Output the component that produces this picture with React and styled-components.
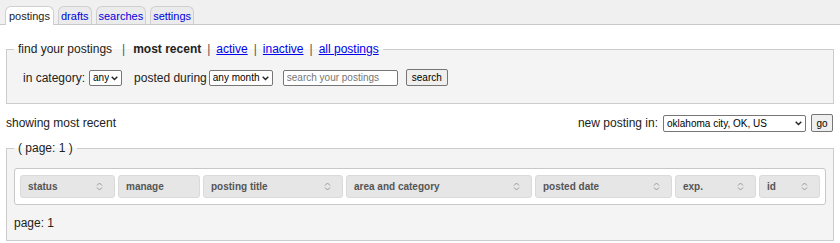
import React from "react";
import styled, { createGlobalStyle } from "styled-components";

const Global = createGlobalStyle`
  html, body { margin: 0; padding: 0; background: #fff; }
  body { font-family: "Liberation Sans", Arial, sans-serif; font-size: 12px; color: #222; }
`;

const TabBar = styled.div`
  display: flex;
  gap: 4px;
  padding: 6px 5px 0;
  background: #f0f0f0;
  border-bottom: 1px solid #c8c8c8;
  height: 18px;
  align-items: flex-end;
`;

const Tab = styled.a`
  display: block;
  box-sizing: border-box;
  padding: 2px ${(p) => (p.$active ? 3 : 2)}px 1px;
  font-size: 11px;
  line-height: 14px;
  height: ${(p) => (p.$active ? "19px" : "18px")};
  border: 1px solid #cfcfcf;
  border-bottom: none;
  border-radius: 6px 6px 0 0;
  background: ${(p) => (p.$active ? "#fff" : "#ebebeb")};
  color: ${(p) => (p.$active ? "#222" : "#0000dd")};
  text-decoration: none;
  margin-bottom: ${(p) => (p.$active ? "-1px" : "0")};
  position: relative;
`;

const Main = styled.div`
  padding: 0 6px;
`;

const Fieldset = styled.fieldset`
  margin: ${(p) => p.$mt}px 0 0;
  border: 1px solid #ccc;
  background: #f4f4f4;
  padding: ${(p) => p.$pt}px 7px ${(p) => p.$pb}px;
  min-width: 0;
`;

const Legend = styled.legend`
  padding: 0 4px;
  font-size: 12px;
  line-height: 15px;
  color: #222;
`;

const Sep = styled.span`
  color: #555;
  margin: 0 ${(p) => p.$r || 6}px 0 ${(p) => p.$l || 6}px;
`;

const Current = styled.b`
  font-weight: bold;
`;

const Link = styled.a`
  color: #0000ee;
  text-decoration: underline;
`;

const FilterRow = styled.div`
  display: flex;
  align-items: center;
  padding-left: 9px;
  height: 17px;
`;

const Label = styled.span`
  font-size: 12px;
  margin-right: ${(p) => p.$mr || 0}px;
`;

const SelectWrap = styled.span`
  position: relative;
  display: inline-block;
  margin-right: ${(p) => p.$mr || 0}px;
  height: ${(p) => p.$h || 16}px;
`;

const Select = styled.select`
  appearance: none;
  -webkit-appearance: none;
  font-family: "Liberation Sans", Arial, sans-serif;
  font-size: 10px;
  height: 100%;
  width: ${(p) => p.$w}px;
  padding: 0 12px 0 3px;
  margin: 0;
  border: 1px solid #767676;
  border-radius: 2px;
  background: #fff;
  color: #000;
  box-sizing: border-box;
  vertical-align: top;
`;

const Chevron = styled.svg`
  position: absolute;
  right: 4px;
  top: 50%;
  margin-top: -2px;
  pointer-events: none;
`;

const Input = styled.input`
  font-family: "Liberation Sans", Arial, sans-serif;
  font-size: 10px;
  width: 115px;
  height: 16px;
  box-sizing: border-box;
  padding: 0 3px;
  margin: 0 8px 0 0;
  border: 1px solid #767676;
  border-radius: 2px;
  &::placeholder { color: #757575; }
`;

const Button = styled.button`
  font-family: "Liberation Sans", Arial, sans-serif;
  font-size: 10px;
  height: ${(p) => p.$h || 17}px;
  width: ${(p) => p.$w}px;
  padding: 0;
  margin: 0;
  border: 1px solid #767676;
  border-radius: 2px;
  background: #efefef;
  color: #000;
`;

const StatusRow = styled.div`
  display: flex;
  align-items: center;
  justify-content: space-between;
  margin-top: 10px;
  height: 18px;
`;

const NewPosting = styled.div`
  display: flex;
  align-items: center;
  gap: 5px;
  margin-right: 1px;
`;

const TableBox = styled.div`
  background: #fff;
  border: 1px solid #c8c8c8;
  border-radius: 3px;
  padding: 6px 5px;
  display: grid;
  grid-template-columns: 95px 82px 140px 186px 137px 81px 61px;
  gap: 3px;
`;

const HeadCell = styled.div`
  height: 23px;
  box-sizing: border-box;
  background: #e6e6e6;
  border: 1px solid #dadada;
  border-radius: 3px;
  display: flex;
  align-items: center;
  justify-content: space-between;
  padding: 0 11px 0 7px;
  font-size: 10px;
  font-weight: bold;
  color: #555;
`;

const PageText = styled.div`
  margin-top: 11px;
  font-size: 12px;
  line-height: 15px;
`;

const SortIcon = () => (
  <svg width="7" height="9" viewBox="0 0 7 9" fill="none" stroke="#9a9a9a" strokeWidth="1">
    <path d="M1 3.5 L3.5 1 L6 3.5" />
    <path d="M1 5.5 L3.5 8 L6 5.5" />
  </svg>
);

const Dropdown = ({ w, mr, h, children }) => (
  <SelectWrap $mr={mr} $h={h}>
    <Select $w={w}>
      <option>{children}</option>
    </Select>
    <Chevron width="7" height="5" viewBox="0 0 7 5" fill="none" stroke="#222" strokeWidth="1.4">
      <path d="M0.7 0.8 L3.5 3.6 L6.3 0.8" />
    </Chevron>
  </SelectWrap>
);

const cols = [
  ["status", true],
  ["manage", false],
  ["posting title", true],
  ["area and category", true],
  ["posted date", true],
  ["exp.", true],
  ["id", true],
];

export default function App() {
  return (
    <>
      <Global />
      <TabBar>
        <Tab $active>postings</Tab>
        <Tab href="#">drafts</Tab>
        <Tab href="#">searches</Tab>
        <Tab href="#">settings</Tab>
      </TabBar>
      <Main>
        <Fieldset $mt={17} $pt={12} $pb={17}>
          <Legend>
            find your postings
            <Sep $l={10} $r={8}>|</Sep>
            <Current>most recent</Current>
            <Sep>|</Sep>
            <Link href="#">active</Link>
            <Sep>|</Sep>
            <Link href="#">inactive</Link>
            <Sep>|</Sep>
            <Link href="#">all postings</Link>
          </Legend>
          <FilterRow>
            <Label $mr={4}>in category:</Label>
            <Dropdown w={33} mr={12}>any</Dropdown>
            <Label $mr={2}>posted during</Label>
            <Dropdown w={64} mr={10}>any month</Dropdown>
            <Input placeholder="search your postings" />
            <Button $w={42}>search</Button>
          </FilterRow>
        </Fieldset>
        <StatusRow>
          <span>showing most recent</span>
          <NewPosting>
            <Label>new posting in:</Label>
            <Dropdown w={143} h={17}>oklahoma city, OK, US</Dropdown>
            <Button $w={22} $h={18}>go</Button>
          </NewPosting>
        </StatusRow>
        <Fieldset $mt={9} $pt={12} $pb={9}>
          <Legend>( page: 1 )</Legend>
          <TableBox>
            {cols.map(([name, sortable]) => (
              <HeadCell key={name}>
                <span>{name}</span>
                {sortable && <SortIcon />}
              </HeadCell>
            ))}
          </TableBox>
          <PageText>page: 1</PageText>
        </Fieldset>
      </Main>
    </>
  );
}
